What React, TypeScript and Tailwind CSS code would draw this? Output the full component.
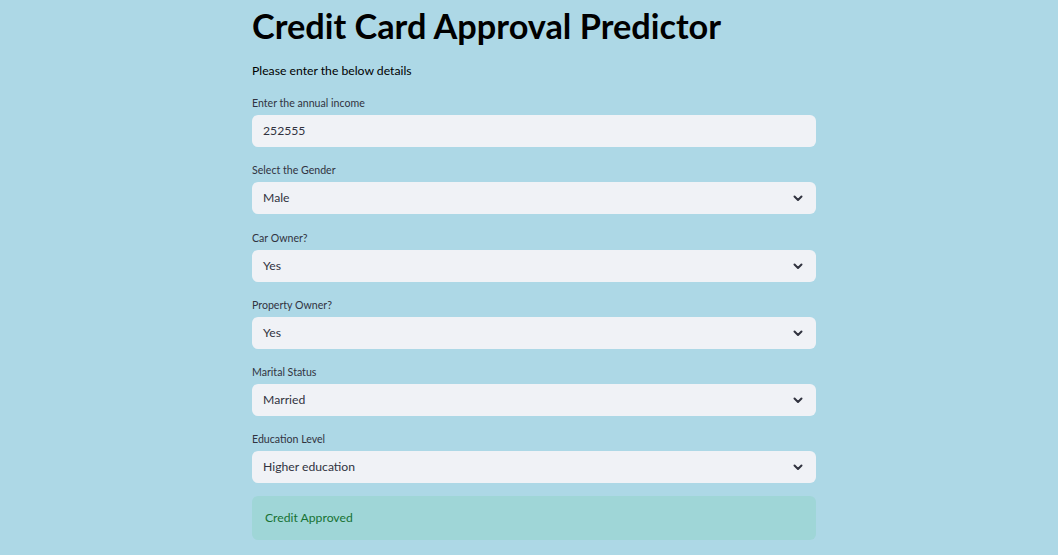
import React from "react";

const font = { fontFamily: '"Lato", "Noto Sans", sans-serif' };

const fields = [
  { label: "Select the Gender", value: "Male" },
  { label: "Car Owner?", value: "Yes" },
  { label: "Property Owner?", value: "Yes" },
  { label: "Marital Status", value: "Married" },
  { label: "Education Level", value: "Higher education" },
];

function Chevron() {
  return (
    <svg width="10" height="7" viewBox="0 0 10 7" className="shrink-0">
      <path d="M1.5 1.5 5 5l3.5-3.5" fill="none" stroke="#31333f" strokeWidth="2" strokeLinecap="round" strokeLinejoin="round" />
    </svg>
  );
}

function Label({ children }: { children: React.ReactNode }) {
  return <div className="text-[10.6px] leading-[14px] mb-[5px] text-[#31333f]">{children}</div>;
}

function SelectBox({ label, value, first }: { label: string; value: string; first?: boolean }) {
  return (
    <div className={first ? "mb-[17px]" : "mb-[16px]"}>
      <Label>{label}</Label>
      <div className="h-[32px] rounded-md bg-[#f0f2f6] flex items-center justify-between pl-[11px] pr-[13px]">
        <span className="text-[12.2px] text-[#31333f]">{value}</span>
        <Chevron />
      </div>
    </div>
  );
}

export default function App() {
  return (
    <div className="min-h-screen bg-[#add8e6]" style={font}>
      <div className="w-[564px] ml-[252px] pt-[6px]">
        <h1 className="text-[34.3px] leading-[40px] font-bold text-black">Credit Card Approval Predictor</h1>
        <p className="mt-[15px] text-[12.2px] leading-[20px] text-black">Please enter the below details</p>

        <div className="mt-[15px] mb-[16px]">
          <Label>Enter the annual income</Label>
          <div className="h-[32px] rounded-md bg-[#f0f2f6] flex items-center pl-[11px]">
            <span className="text-[12.2px] text-[#31333f]">252555</span>
          </div>
        </div>

        {fields.map((f, i) => (
          <SelectBox key={f.label} label={f.label} value={f.value} first={i === 0} />
        ))}

        <div className="-mt-[3px] h-[44px] rounded-md bg-[#9fd6d7] flex items-center pl-[13px]">
          <span className="text-[12.2px] text-[#177233]">Credit Approved</span>
        </div>
      </div>
    </div>
  );
}
